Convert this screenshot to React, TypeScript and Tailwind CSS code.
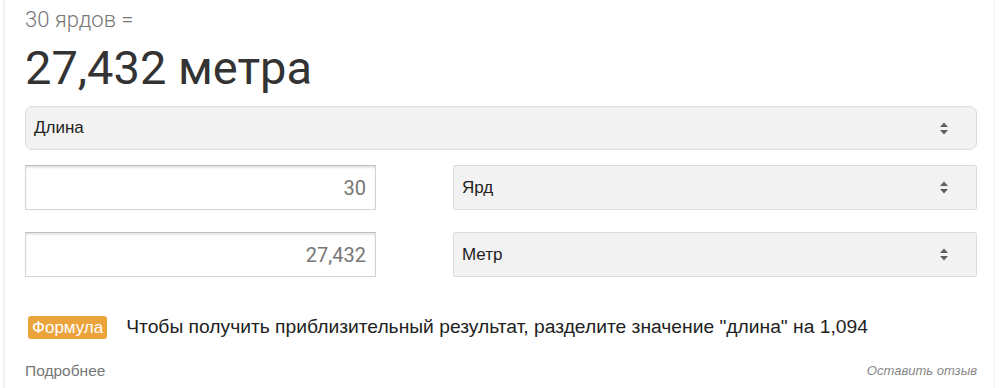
import React from 'react';

const Arrows: React.FC = () => (
  <svg width="10" height="15" viewBox="0 0 10 15" className="shrink-0">
    <path d="M5 1.5 L9 6 L1 6 Z" fill="#5f5f5f" />
    <path d="M5 13.5 L9 9 L1 9 Z" fill="#5f5f5f" />
  </svg>
);

const Select: React.FC<{ label: string; className?: string }> = ({ label, className = '' }) => (
  <div
    className={`flex items-center justify-between border border-[#dcdcdc] bg-[#f2f2f2] pl-[8px] pr-[27px] text-[17px] text-[#222] ${className}`}
    style={{ fontFamily: '"Liberation Sans", Arial, sans-serif' }}
  >
    <span>{label}</span>
    <Arrows />
  </div>
);

const NumberInput: React.FC<{ value: string }> = ({ value }) => (
  <div
    className="flex h-[45px] w-[351px] items-center justify-end border border-[#d4d4d4] border-t-[#bdbdbd] bg-white pr-[9px] text-[20px] text-[#777] shadow-[inset_0_2px_2px_rgba(0,0,0,0.1)]"
    style={{ fontFamily: 'Roboto, "Liberation Sans", sans-serif' }}
  >
    {value}
  </div>
);

export default function App() {
  return (
    <div className="h-[388px] w-[1000px] overflow-hidden bg-white">
      <div className="ml-[3px] flex h-full w-[992px] flex-col border-l-2 border-r border-[#f0f0f0] pl-[20px] pr-[17px]">
        <div
          className="mt-[7px] text-[22px] leading-[26px] text-[#777]"
          style={{ fontFamily: 'Roboto, "Liberation Sans", sans-serif', fontWeight: 300 }}
        >
          30 ярдов =
        </div>
        <div
          className="mt-[8px] text-[47px] leading-[54px] text-[#333]"
          style={{ fontFamily: 'Roboto, "Liberation Sans", sans-serif' }}
        >
          27,432 метра
        </div>

        <Select label="Длина" className="mt-[11px] h-[44px] rounded-[7px]" />

        <div className="mt-[15px] flex items-center justify-between">
          <NumberInput value="30" />
          <Select label="Ярд" className="h-[45px] w-[524px] rounded-[2px]" />
        </div>
        <div className="mt-[22px] flex items-center justify-between">
          <NumberInput value="27,432" />
          <Select label="Метр" className="h-[45px] w-[524px] rounded-[2px]" />
        </div>

        <div
          className="mt-[36px] flex items-center pl-[3px]"
          style={{ fontFamily: '"Liberation Sans", Arial, sans-serif' }}
        >
          <span className="rounded-[3px] bg-[#eba43c] px-[4px] py-[1px] text-[17px] leading-[21px] text-white">
            Формула
          </span>
          <span className="ml-[19px] text-[19.25px] text-[#222]">
            Чтобы получить приблизительный результат, разделите значение "длина" на 1,094
          </span>
        </div>

        <div
          className="mt-[17px] flex items-center justify-between"
          style={{ fontFamily: '"Liberation Sans", Arial, sans-serif' }}
        >
          <span className="text-[15.5px] text-[#777]">Подробнее</span>
          <span className="text-[13px] italic text-[#888]">Оставить отзыв</span>
        </div>
      </div>
    </div>
  );
}
